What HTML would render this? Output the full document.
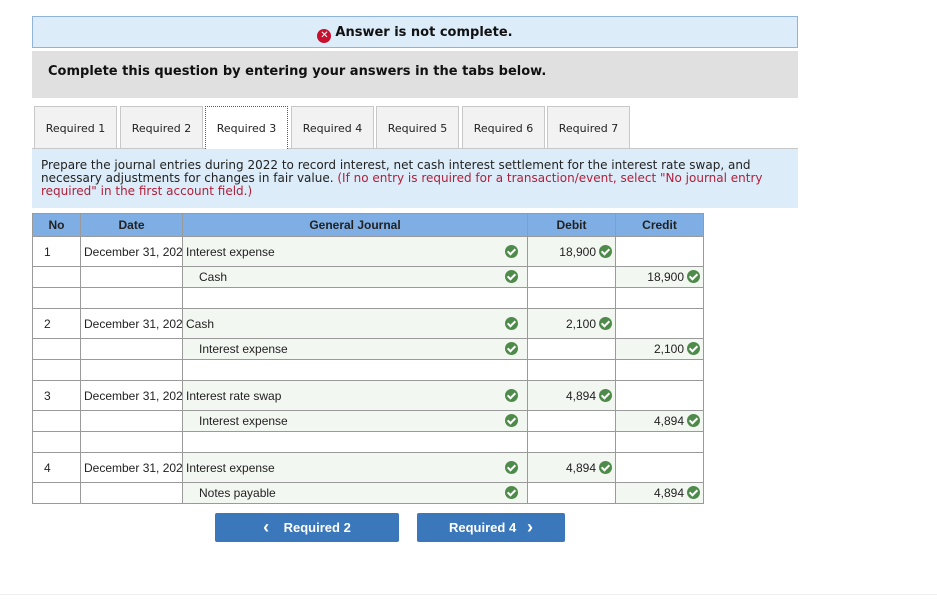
<!DOCTYPE html>
<html><head><style>
body{margin:0;background:#fff;font-family:"Liberation Sans",Arial,sans-serif;width:937px;height:606px;position:relative;overflow:hidden}
.ans{position:absolute;left:32px;top:16px;width:764px;height:30px;background:#dcecf9;border:1px solid #8fb3d9;font-family:Verdana,"DejaVu Sans",sans-serif;font-weight:bold;font-size:13px;text-align:center;line-height:32px;color:#111}
.x{display:inline-block;width:14px;height:14px;border-radius:50%;background:#c8102e;color:#fff;font-size:10px;line-height:14px;vertical-align:-2px;margin-right:4px}
.gray{position:absolute;left:32px;top:51px;width:766px;height:47px;background:#e0e0e0;font-family:Verdana,"DejaVu Sans",sans-serif;font-weight:bold;font-size:13px;line-height:42px;padding-left:16px;box-sizing:border-box;color:#111}
.tab{position:absolute;top:106px;width:83px;height:42px;background:#f2f2f2;border:1px solid #c8c8c8;border-bottom:none;box-sizing:border-box;font-family:Verdana,"DejaVu Sans",sans-serif;font-size:11px;text-align:center;line-height:44px;color:#222}
.tab.act{background:#fff;border:1px dotted #2c5f9e;border-bottom:none;height:43px}
.tline{position:absolute;left:32px;top:148px;width:766px;height:1px;background:#c8c8c8}
.inst{position:absolute;left:32px;top:149px;width:766px;height:59px;background:#dcecf9;font-family:Verdana,"DejaVu Sans",sans-serif;font-size:12px;line-height:13px;padding:10px 9px;box-sizing:border-box;color:#222}
.inst span{color:#b0203a}
table{position:absolute;left:32px;top:213px;border-collapse:collapse;font-size:12px;color:#222;table-layout:fixed;width:671px}
td,th{border:1px solid #9a9a9a;padding:0 3px;white-space:nowrap;overflow:hidden}
td:first-child{padding-left:11px}
th{background:#7eaee3;font-weight:bold;height:22px;font-size:12px}
td.g{background:#f3f7f1}
.c{display:inline-block;width:13px;height:13px;border-radius:50%;background:#4e8a4a;vertical-align:-2px;position:relative;margin-left:3px}
.c:after{content:"";position:absolute;left:4px;top:2px;width:3px;height:6px;border:solid #fff;border-width:0 2px 2px 0;transform:rotate(45deg)}
td .c[style]{margin-right:6px}
.btn{position:absolute;top:513px;height:29px;background:#3a77bb;border-radius:2px;color:#fff;font-weight:bold;font-size:13px;text-align:center;line-height:29px}
.foot{position:absolute;left:0;top:594px;width:937px;height:1px;background:#eee}
</style></head><body>
<div class="ans"><span class="x">✕</span>Answer is not complete.</div>
<div class="gray">Complete this question by entering your answers in the tabs below.</div>
<div class="tab" style="left:34px">Required 1</div>
<div class="tab" style="left:120px">Required 2</div>
<div class="tline"></div>
<div class="tab act" style="left:205px">Required 3</div>
<div class="tab" style="left:291px">Required 4</div>
<div class="tab" style="left:376px">Required 5</div>
<div class="tab" style="left:462px">Required 6</div>
<div class="tab" style="left:547px">Required 7</div>
<div class="inst">Prepare the journal entries during 2022 to record interest, net cash interest settlement for the interest rate swap, and necessary adjustments for changes in fair value. <span>(If no entry is required for a transaction/event, select "No journal entry required" in the first account field.)</span></div>
<table>
<colgroup><col style="width:48px"><col style="width:102px"><col style="width:345px"><col style="width:88px"><col style="width:88px"></colgroup>
<tr><th style="padding:0">No</th><th>Date</th><th>General Journal</th><th>Debit</th><th>Credit</th></tr>
<tr style="height:30px"><td>1</td><td>December 31, 202</td><td class="g">Interest expense<span class="c" style="float:right"></span></td><td class="g" style="text-align:right">18,900<span class="c"></span></td><td></td></tr>
<tr style="height:21px"><td></td><td></td><td class="g" style="padding-left:16px">Cash<span class="c" style="float:right"></span></td><td></td><td class="g" style="text-align:right">18,900<span class="c"></span></td></tr>
<tr style="height:21px"><td></td><td></td><td></td><td></td><td></td></tr>
<tr style="height:30px"><td>2</td><td>December 31, 202</td><td class="g">Cash<span class="c" style="float:right"></span></td><td class="g" style="text-align:right">2,100<span class="c"></span></td><td></td></tr>
<tr style="height:21px"><td></td><td></td><td class="g" style="padding-left:16px">Interest expense<span class="c" style="float:right"></span></td><td></td><td class="g" style="text-align:right">2,100<span class="c"></span></td></tr>
<tr style="height:21px"><td></td><td></td><td></td><td></td><td></td></tr>
<tr style="height:30px"><td>3</td><td>December 31, 202</td><td class="g">Interest rate swap<span class="c" style="float:right"></span></td><td class="g" style="text-align:right">4,894<span class="c"></span></td><td></td></tr>
<tr style="height:21px"><td></td><td></td><td class="g" style="padding-left:16px">Interest expense<span class="c" style="float:right"></span></td><td></td><td class="g" style="text-align:right">4,894<span class="c"></span></td></tr>
<tr style="height:21px"><td></td><td></td><td></td><td></td><td></td></tr>
<tr style="height:30px"><td>4</td><td>December 31, 202</td><td class="g">Interest expense<span class="c" style="float:right"></span></td><td class="g" style="text-align:right">4,894<span class="c"></span></td><td></td></tr>
<tr style="height:21px"><td></td><td></td><td class="g" style="padding-left:16px">Notes payable<span class="c" style="float:right"></span></td><td></td><td class="g" style="text-align:right">4,894<span class="c"></span></td></tr>
</table>
<div class="btn" style="left:215px;width:184px"><span style="font-size:18px;vertical-align:-1px">&lsaquo;</span>&nbsp;&nbsp;&nbsp; Required 2</div>
<div class="btn" style="left:417px;width:148px">Required 4 &nbsp;&nbsp;<span style="font-size:18px;vertical-align:-1px">&rsaquo;</span></div>
<div class="foot"></div>
</body></html>
